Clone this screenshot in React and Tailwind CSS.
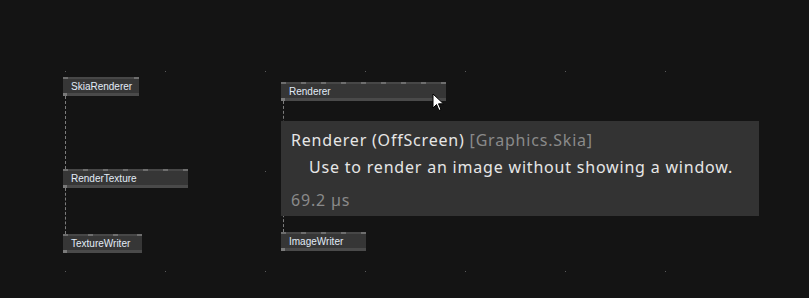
import React from 'react';

// --- Patch node on the canvas ---
const Node = ({ label, x, y, w, pins }) => (
  <div className="absolute flex flex-col" style={{ left: x, top: y, width: w }}>
    <div className="relative h-[2px] bg-[#474747]">
      {pins.map((p, i) => (
        <span key={i} className="absolute top-0 h-[2px] w-[5px] bg-[#6e6e6e]" style={{ left: p }} />
      ))}
    </div>
    <div className="h-[14px] bg-[#363636] pl-[8px] text-[10px] leading-[15px] text-[#e2ecf6] font-['Liberation_Sans',sans-serif]">
      {label}
    </div>
    <div className="relative h-[3px] bg-[#4a4a4a]">
      <span className="absolute left-0 top-0 h-[3px] w-[4px] bg-[#7a7a7a]" />
    </div>
  </div>
);

const Link = ({ x, y1, y2 }) => (
  <div
    className="absolute w-0 border-l border-dashed border-[#7c7c7c]"
    style={{ left: x, top: y1, height: y2 - y1 }}
  />
);

const dots = [];
[71, 171, 271].forEach((y) => {
  [65, 165, 265, 365, 465, 565, 665].forEach((x) => dots.push({ x, y }));
});

export default function App() {
  return (
    <div className="relative h-[298px] w-[809px] overflow-hidden bg-[#141414]">
      {/* grid dots */}
      {dots.map((d, i) => (
        <span key={i} className="absolute h-px w-px bg-[#5a5a5a]" style={{ left: d.x, top: d.y }} />
      ))}

      {/* links */}
      <Link x={65} y1={96} y2={169} />
      <Link x={65} y1={188} y2={234} />
      <Link x={283} y1={101} y2={232} />

      {/* nodes */}
      <Node label="SkiaRenderer" x={63} y={77} w={76} pins={[0, 71]} />
      <Node label="Renderer" x={281} y={82} w={165} pins={[0, 20, 40, 60, 80, 100, 120, 140, 160]} />
      <Node label="RenderTexture" x={63} y={169} w={125} pins={[0, 20, 40, 60, 80, 100, 120]} />
      <Node label="TextureWriter" x={63} y={234} w={79} pins={[0, 25, 50, 74]} />
      <Node label="ImageWriter" x={281} y={232} w={85} pins={[0, 20, 40, 60, 80]} />

      {/* tooltip */}
      <div className="absolute left-[281px] top-[121px] flex h-[95px] w-[478px] flex-col bg-[#333333] pl-[10px] pt-[8px] font-['Noto_Sans',sans-serif] text-[16px] tracking-[0.8px]">
        <div className="leading-[22px] text-[#e6e6e6]">
          Renderer (OffScreen) <span className="text-[#8a8a8a]">[Graphics.Skia]</span>
        </div>
        <div className="mt-[5px] pl-[18px] leading-[22px] text-[#e6e6e6]">
          Use to render an image without showing a window.
        </div>
        <div className="mt-[11px] leading-[22px] text-[#8a8a8a]">69.2 µs</div>
      </div>

      {/* mouse cursor */}
      <svg className="absolute left-[432px] top-[93px]" width="14" height="20" viewBox="0 0 14 20">
        <path d="M1 1 L1 15 L4.5 11.5 L7 17.5 L9 16.5 L6.5 10.8 L11.5 10.8 Z" fill="#ffffff" stroke="#000000" strokeWidth="1" strokeLinejoin="round" />
      </svg>
    </div>
  );
}
